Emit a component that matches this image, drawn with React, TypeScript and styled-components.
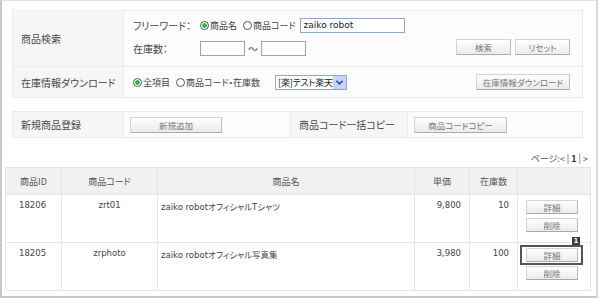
import React from 'react';
import styled, { createGlobalStyle } from 'styled-components';

const GlobalStyle = createGlobalStyle`
  html, body {
    margin: 0;
    padding: 0;
    background: #ffffff;
  }
  body {
    font-family: "Noto Sans CJK JP", "Liberation Sans", sans-serif;
    font-feature-settings: "palt";
    color: #444;
  }
`;

// Frame
const Frame = styled.div`
  box-sizing: border-box;
  width: 598px;
  height: 298px;
  border-left: 2px solid #c9c9c9;
  border-top: 1px solid #e2e2e2;
  border-right: 2px solid #dadada;
  border-bottom: 2px solid #c9c9c9;
  background: #fff;
  display: flex;
  flex-direction: column;
`;

const Panel = styled.table<{ $top: number }>`
  margin: ${(p) => p.$top}px 0 0 10px;
  width: 571px;
  border-collapse: collapse;
  table-layout: fixed;
  font-size: 10px;
`;

const LabelCell = styled.td<{ $w?: number }>`
  width: ${(p) => (p.$w ? `${p.$w}px` : 'auto')};
  background: #f6f6f6;
  border: 1px solid #ebebeb;
  padding: 0 0 0 8px;
  color: #4a4a4a;
  box-sizing: border-box;
`;

const ContentCell = styled.td<{ $h: number; $w?: number; $top?: boolean; $pl?: number }>`
  height: ${(p) => p.$h}px;
  width: ${(p) => (p.$w ? `${p.$w}px` : 'auto')};
  background: #fcfcfc;
  border: 1px solid #ebebeb;
  padding: ${(p) => (p.$top ? 3 : 0)}px 0 0 ${(p) => p.$pl ?? 9}px;
  vertical-align: ${(p) => (p.$top ? 'top' : 'middle')};
  box-sizing: border-box;
`;

const Line = styled.div`
  display: flex;
  align-items: center;
  height: 23px;
`;

const FieldLabel = styled.span`
  width: 67px;
  color: #4a4a4a;
`;

const Radio = styled.label<{ $on?: boolean; $mr?: number }>`
  display: inline-flex;
  align-items: center;
  margin-right: ${(p) => p.$mr ?? 6}px;
  font-size: 9px;
  color: #444;
  white-space: nowrap;
  &::before {
    content: '';
    box-sizing: border-box;
    width: 9px;
    height: 9px;
    border-radius: 50%;
    border: 1px solid #4a5a6a;
    margin-right: 1px;
    background: ${(p) =>
      p.$on ? 'radial-gradient(circle, #2fb52f 0 2px, #fff 2.5px)' : '#fff'};
  }
`;

const TextBox = styled.div<{ $w: number }>`
  box-sizing: border-box;
  width: ${(p) => p.$w}px;
  height: 15px;
  border: 1px solid #8fa9c7;
  background: #fff;
  font-family: "DejaVu Sans", "Liberation Sans", sans-serif;
  font-size: 9px;
  line-height: 13px;
  padding-left: 3px;
  color: #222;
`;

const Tilde = styled.span`
  margin: 0 3px;
  color: #555;
`;

const Spacer = styled.div`
  flex: 1;
`;

const Button = styled.div<{ $w: number; $h?: number }>`
  box-sizing: border-box;
  width: ${(p) => p.$w}px;
  height: ${(p) => p.$h ?? 16}px;
  display: flex;
  align-items: center;
  justify-content: center;
  border: 1px solid #d3d3d3;
  border-right-color: #bbbbbb;
  border-bottom-color: #aaaaaa;
  background: linear-gradient(#ffffff, #ebebeb);
  font-size: 8.5px;
  color: #777;
  white-space: nowrap;
`;

const ButtonRow = styled.div<{ $lift?: number }>`
  display: flex;
  gap: 4px;
  margin: 0 12px 0 0;
  transform: translateY(${(p) => -(p.$lift ?? 0)}px);
`;

const Select = styled.div`
  box-sizing: border-box;
  display: flex;
  width: 72px;
  height: 15px;
  border: 1px solid #8fa9c7;
  background: #fff;
  margin-left: 9px;
  font-size: 9px;
  letter-spacing: -0.2px;
  color: #222;
  white-space: nowrap;
  overflow: hidden;
`;

const SelectText = styled.span`
  flex: 1;
  padding-left: 2px;
  line-height: 13px;
  overflow: hidden;
`;

const SelectArrow = styled.span`
  flex: none;
  width: 13px;
  height: 13px;
  background: #c4d5f5;
  display: flex;
  align-items: center;
  justify-content: center;
`;

const Pager = styled.div`
  margin: 14px 8px 0 0;
  height: 12px;
  text-align: right;
  font-size: 9px;
  color: #555;
  b {
    color: #333;
  }
`;

// data table
const Grid = styled.table`
  margin: 3px 0 0 3px;
  width: 586px;
  border-collapse: collapse;
  table-layout: fixed;
  font-size: 9px;
`;

const Th = styled.th<{ $w?: number }>`
  width: ${(p) => (p.$w ? `${p.$w}px` : 'auto')};
  height: 27px;
  padding: 0;
  box-sizing: border-box;
  background: #f1f1f1;
  border: 1px solid #e6e6e6;
  font-weight: normal;
  color: #555;
`;

const Td = styled.td<{ $align?: string; $pl?: number }>`
  height: 48px;
  border: 1px solid #e6e6e6;
  background: #fff;
  vertical-align: top;
  padding: 5px 8px 0 ${(p) => p.$pl ?? 8}px;
  text-align: ${(p) => p.$align ?? 'left'};
  font-family: "DejaVu Sans", "Noto Sans CJK JP", sans-serif;
  font-size: 8.5px;
  color: #444;
  white-space: nowrap;
  box-sizing: border-box;
`;

const ActionCell = styled.td`
  border: 1px solid #e6e6e6;
  vertical-align: top;
  padding: 5px 0 0 8px;
  box-sizing: border-box;
`;

const Actions = styled.div`
  display: flex;
  flex-direction: column;
  gap: 4px;
  width: 52px;
  position: relative;
`;

const Focus = styled.div`
  position: absolute;
  left: -6px;
  top: -3px;
  width: 63px;
  height: 20px;
  box-sizing: border-box;
  border: 2px solid #555;
`;

const Badge = styled.span`
  position: absolute;
  right: -2px;
  top: -11px;
  width: 8px;
  height: 8px;
  background: #3b3b3b;
  color: #fff;
  font-family: "DejaVu Sans", sans-serif;
  font-size: 7px;
  line-height: 8px;
  text-align: center;
  font-weight: bold;
`;

const products = [
  { id: '18206', code: 'zrt01', name: 'zaiko robotオフィシャルTシャツ', price: '9,800', stock: '10' },
  { id: '18205', code: 'zrphoto', name: 'zaiko robotオフィシャル写真集', price: '3,980', stock: '100', focus: true },
];

export default function App() {
  return (
    <>
      <GlobalStyle />
      <Frame>
        <Panel $top={9}>
          <tbody>
            <tr>
              <LabelCell $w={111}>商品検索</LabelCell>
              <ContentCell $h={56} $top>
                <Line>
                  <FieldLabel>フリーワード：</FieldLabel>
                  <Radio $on>商品名</Radio>
                  <Radio $mr={4}>商品コード</Radio>
                  <TextBox $w={105}>zaiko robot</TextBox>
                </Line>
                <Line>
                  <FieldLabel>在庫数：</FieldLabel>
                  <TextBox $w={45} />
                  <Tilde>〜</Tilde>
                  <TextBox $w={45} />
                  <Spacer />
                  <ButtonRow $lift={2}>
                    <Button $w={55}>検索</Button>
                    <Button $w={55}>リセット</Button>
                  </ButtonRow>
                </Line>
              </ContentCell>
            </tr>
            <tr>
              <LabelCell>在庫情報ダウンロード</LabelCell>
              <ContentCell $h={31}>
                <Line>
                  <Radio $on>全項目</Radio>
                  <Radio>商品コード・在庫数</Radio>
                  <Select>
                    <SelectText>[楽]テスト楽天</SelectText>
                    <SelectArrow>
                      <svg width="7" height="5" viewBox="0 0 7 5">
                        <path d="M0.5 0.8 L3.5 3.8 L6.5 0.8" fill="none" stroke="#2a4fa8" strokeWidth="1.6" />
                      </svg>
                    </SelectArrow>
                  </Select>
                  <Spacer />
                  <ButtonRow>
                    <Button $w={94}>在庫情報ダウンロード</Button>
                  </ButtonRow>
                </Line>
              </ContentCell>
            </tr>
          </tbody>
        </Panel>

        <Panel $top={13}>
          <tbody>
            <tr>
              <LabelCell $w={111}>新規商品登録</LabelCell>
              <ContentCell $h={26} $w={167} $pl={6}>
                <Button $w={92}>新規追加</Button>
              </ContentCell>
              <LabelCell $w={117}>商品コード一括コピー</LabelCell>
              <ContentCell $h={26} $pl={6}>
                <Button $w={93}>商品コードコピー</Button>
              </ContentCell>
            </tr>
          </tbody>
        </Panel>

        <Pager>
          ページ:&lt; | <b>1</b> | &gt;
        </Pager>

        <Grid>
          <thead>
            <tr>
              <Th $w={56}>商品ID</Th>
              <Th $w={96}>商品コード</Th>
              <Th>商品名</Th>
              <Th $w={55}>単価</Th>
              <Th $w={48}>在庫数</Th>
              <Th $w={73} />
            </tr>
          </thead>
          <tbody>
            {products.map((p) => (
              <tr key={p.id}>
                <Td $pl={13}>{p.id}</Td>
                <Td $align="center">{p.code}</Td>
                <Td $pl={3}>{p.name}</Td>
                <Td $align="right">{p.price}</Td>
                <Td $align="right">{p.stock}</Td>
                <ActionCell>
                  <Actions>
                    {p.focus && (
                      <>
                        <Focus />
                        <Badge>1</Badge>
                      </>
                    )}
                    <Button $w={52} $h={14}>詳細</Button>
                    <Button $w={52} $h={14}>削除</Button>
                  </Actions>
                </ActionCell>
              </tr>
            ))}
          </tbody>
        </Grid>
      </Frame>
    </>
  );
}
